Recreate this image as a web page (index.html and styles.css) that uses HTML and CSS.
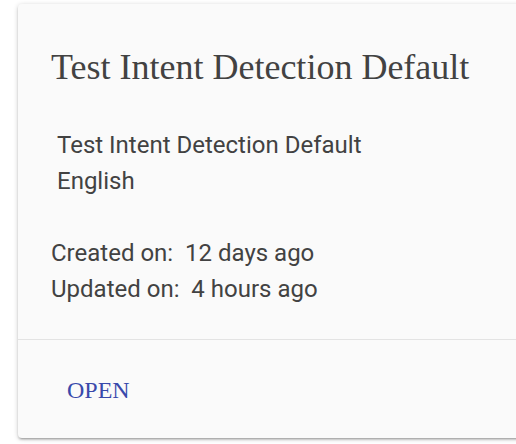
FILE: index.html
```html
<!DOCTYPE html>
<html>
<head>
<meta charset="utf-8">
<link rel="stylesheet" href="styles.css">
</head>
<body>
<div class="card">
  <div class="card-content">
    <h2 class="title">Test Intent Detection Default</h2>
    <div class="meta">
      <div class="line indent">Test Intent Detection Default</div>
      <div class="line indent">English</div>
    </div>
    <div class="dates">
      <div class="line">Created on:&nbsp; 12 days ago</div>
      <div class="line">Updated on:&nbsp; 4 hours ago</div>
    </div>
  </div>
  <div class="card-actions">
    <a class="btn">OPEN</a>
  </div>
</div>
</body>
</html>
```
FILE: styles.css
```css
html, body {
  margin: 0;
  padding: 0;
  background: #ffffff;
}
body {
  padding: 4px 0 0 18px;
  overflow: hidden;
  height: 444px;
  box-sizing: border-box;
}
.card {
  width: 540px;
  height: 434px;
  background: #fafafa;
  border-radius: 4px;
  box-shadow: 0 2px 2px rgba(0,0,0,0.14), 0 3px 1px -2px rgba(0,0,0,0.12), 0 1px 5px rgba(0,0,0,0.2);
  display: flex;
  flex-direction: column;
}
.card-content {
  padding: 0 0 0 33px;
  height: 336px;
  flex: none;
  border-bottom: 1px solid #e3e3e3;
  box-sizing: border-box;
}
.title {
  margin: 0;
  padding-top: 43px;
  font-family: "Liberation Serif", serif;
  font-weight: normal;
  font-size: 36px;
  line-height: 40px;
  color: #424242;
}
.meta {
  margin-top: 40px;
}
.line {
  font-family: Roboto, sans-serif;
  font-size: 24px;
  line-height: 36px;
  color: #424242;
}
.indent {
  padding-left: 6px;
}
.dates {
  margin-top: 36px;
}
.card-actions {
  padding-left: 49px;
  padding-top: 2px;
  flex: 1;
  display: flex;
  align-items: center;
}
.btn {
  font-family: "Liberation Serif", serif;
  font-size: 24px;
  color: #3949ab;
  text-decoration: none;
}
```
